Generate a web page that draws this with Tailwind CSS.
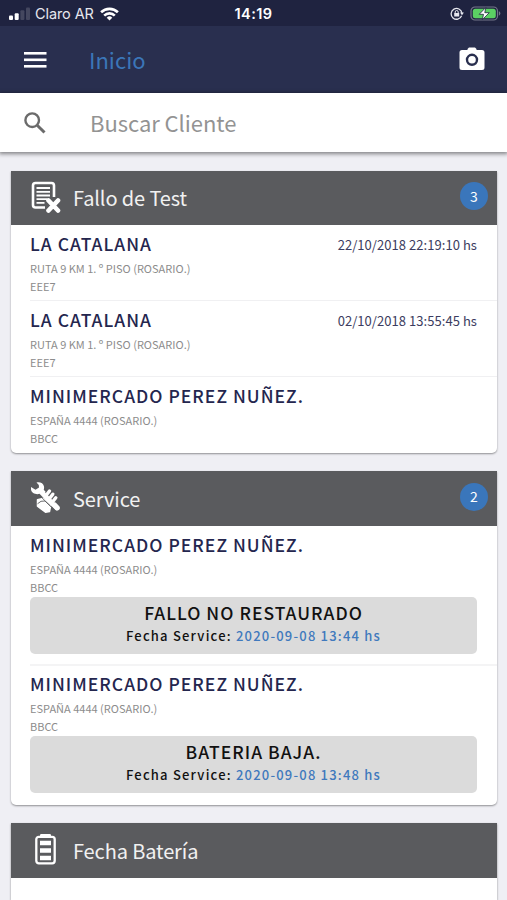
<!DOCTYPE html>
<html lang="es">
<head>
    <meta charset="UTF-8">
    <meta name="viewport" content="width=device-width, initial-scale=1.0">
    <title>Inicio</title>
    <!-- Tailwind CSS CDN -->
    <script src="https://cdn.jsdelivr.net/npm/@tailwindcss/browser@4"></script>
    <style>
        body {
            font-family: 'Noto Sans CJK JP', 'Noto Sans', sans-serif;
        }
    </style>
</head>
<body class="flex h-[900px] flex-col overflow-hidden bg-[#efeff4]">
    <!-- Status bar -->
    <div class="grid h-[26px] shrink-0 grid-cols-3 items-center bg-[#1f2340] pt-px font-['Inter'] text-[14.5px] text-[#e6e7ee]">
        <div class="flex items-center pl-[9px]">
            <svg class="h-[13px] w-[22px]" viewBox="0 0 22 13">
                <rect x="0" y="8.500" width="4" height="4.500" rx="1" fill="#fff"/>
                <rect x="5.700" y="6.200" width="4" height="6.800" rx="1" fill="#fff"/>
                <rect x="11.400" y="3.300" width="4" height="9.700" rx="1" fill="#44475f"/>
                <rect x="17" y="0.500" width="4" height="12.500" rx="1" fill="#44475f"/>
            </svg>
            <span class="ml-1 whitespace-nowrap tracking-[-0.1px]">Claro AR</span>
            <svg class="ml-[6px] h-[14px] w-[19px]" viewBox="0 0 19 14" fill="none" stroke="#fff" stroke-width="2.600">
                <path d="M1.100 5.300a12 12 0 0 1 16.800 0"/>
                <path d="M4.200 8.600a7.500 7.500 0 0 1 10.600 0"/>
                <path d="M9.500 13.500 6.700 10.700a4 4 0 0 1 5.600 0z" fill="#fff" stroke="none"/>
            </svg>
        </div>
        <div class="text-center font-semibold tracking-[0.4px] text-white">14:19</div>
        <div class="flex items-center justify-end gap-[6px] pr-[6px]">
            <svg class="h-[13px] w-[14px]" viewBox="0 0 14 13" fill="none" stroke="#e6e7ee" stroke-width="1.300">
                <path d="M11.600 8.800A5.400 5.400 0 1 1 11.900 6"/>
                <path d="M10 5.500h3.900L12 8.300z" fill="#e6e7ee" stroke="none"/>
                <rect x="4.200" y="6" width="5" height="3.500" fill="#e6e7ee" stroke="none"/>
                <path d="M5.200 6.200V5a1.500 1.500 0 0 1 3 0v1.200" stroke-width="1"/>
            </svg>
            <svg class="h-[15px] w-[31px]" viewBox="0 0 31 15">
                <rect x="1" y="1" width="26.500" height="13" rx="4" fill="none" stroke="#747789" stroke-width="1.200"/>
                <rect x="2.800" y="2.800" width="23" height="9.400" rx="2.500" fill="#5bd163"/>
                <path d="M28.900 5.300a2.400 2.400 0 0 1 0 4.400z" fill="#747789"/>
                <path d="M15.800 1.500 9.200 8.300h4.300l-1.200 5.400 7-7h-4.500z" fill="#fff" stroke="#1f2340" stroke-width=".8"/>
            </svg>
        </div>
    </div>

    <!-- Toolbar -->
    <header class="flex h-[67px] shrink-0 items-center bg-[#292f4f] pr-[22px] pb-[2px] pl-[24px]">
        <svg class="mt-[2px] h-[16px] w-[23px]" viewBox="0 0 23 16" fill="#fff">
            <rect y="0" width="22.500" height="2.600"/>
            <rect y="6.500" width="22.500" height="2.600"/>
            <rect y="13" width="22.500" height="2.600"/>
        </svg>
        <h1 class="ml-[42px] text-[22px] leading-[30px] text-[#3b76b8]">Inicio</h1>
        <svg class="ml-auto h-[24px] w-[26px]" viewBox="0 0 26 24">
            <path d="M8.500 2 10 .6h6L17.500 2v1H23a2.500 2.500 0 0 1 2.500 2.500v15A2.500 2.500 0 0 1 23 23H3a2.500 2.500 0 0 1-2.500-2.500v-15A2.500 2.500 0 0 1 3 3h5.500z" fill="#fff"/>
            <circle cx="13" cy="12.800" r="5" fill="none" stroke="#292f4f" stroke-width="2.400"/>
        </svg>
    </header>

    <!-- Search -->
    <div class="relative flex h-[59px] shrink-0 items-center bg-white pl-[24px] shadow-[0_1px_4px_1px_rgba(0,0,0,0.45)]">
        <svg class="h-[22px] w-[22px]" viewBox="0 0 22 22" fill="none" stroke="#6b6b6b">
            <circle cx="8.200" cy="8.200" r="6.800" stroke-width="2.400"/>
            <path d="m13.200 13.200 7.300 7.300" stroke-width="3"/>
        </svg>
        <span class="mb-px ml-[44px] text-[22px] leading-[30px] tracking-[-0.05px] text-[#939393]">Buscar Cliente</span>
    </div>

    <main class="flex min-h-0 flex-1 flex-col gap-[18px] overflow-hidden pt-[19px] pr-[10px] pl-[11px]">
        <!-- Fallo de Test -->
        <section class="shrink-0 rounded-b-[5px] bg-white shadow-[0_1px_2px_rgba(0,0,0,0.4)]">
            <div class="flex h-[54px] items-center bg-[#5a5b5e] pr-[9px] pl-[20px]">
                <svg class="mb-[2px] h-[32px] w-[30px]" viewBox="0 0 30 32" fill="none" stroke="#fff">
                    <path d="M14 26.500H4.500A2.500 2.500 0 0 1 2 24V4.500A2.500 2.500 0 0 1 4.500 2h16A2.500 2.500 0 0 1 23 4.500V16" stroke-width="2.600"/>
                    <path d="M5.500 7h13.500M5.500 10.800h13.500M5.500 14.500h13.500M5.500 18.200h11M5.500 21.800h8" stroke-width="1.800"/>
                    <path d="m17.500 19.500 9.500 10M27 19.500l-9.500 10" stroke-width="4.600" stroke-linecap="round"/>
                </svg>
                <h2 class="ml-[12px] text-[20px] leading-[30px] tracking-[-0.12px] text-[#f1f1f1]">Fallo de Test</h2>
                <span class="mb-[4px] ml-auto flex h-[28px] w-[28px] items-center justify-center rounded-full bg-[#3a76bb] text-[14px] text-white">3</span>
            </div>
            <ul class="pl-[19px]">
                <li class="h-[76px] border-b border-[#f0f0f2] pt-[7px]">
                    <div class="flex items-center justify-between pr-[20px]">
                        <h3 class="text-[17.5px] leading-[24px] font-medium tracking-[1.02px] text-[#24264e]">LA CATALANA</h3>
                        <span class="pt-px text-[13px] leading-[23px] tracking-[0.05px] text-[#3c3c60]">22/10/2018 22:19:10 hs</span>
                    </div>
                    <p class="mt-[3px] text-[11px] leading-[18px] text-[#8c8c8c]">RUTA 9 KM 1. º PISO (ROSARIO.)</p>
                    <p class="text-[11px] leading-[18px] text-[#8c8c8c]">EEE7</p>
                </li>
                <li class="h-[76px] border-b border-[#f0f0f2] pt-[7px]">
                    <div class="flex items-center justify-between pr-[20px]">
                        <h3 class="text-[17.5px] leading-[24px] font-medium tracking-[1.02px] text-[#24264e]">LA CATALANA</h3>
                        <span class="pt-px text-[13px] leading-[23px] tracking-[0.05px] text-[#3c3c60]">02/10/2018 13:55:45 hs</span>
                    </div>
                    <p class="mt-[3px] text-[11px] leading-[18px] text-[#8c8c8c]">RUTA 9 KM 1. º PISO (ROSARIO.)</p>
                    <p class="text-[11px] leading-[18px] text-[#8c8c8c]">EEE7</p>
                </li>
                <li class="h-[76px] pt-[7px]">
                    <h3 class="text-[17.5px] leading-[24px] font-medium tracking-[1.02px] text-[#24264e]">MINIMERCADO PEREZ NUÑEZ.</h3>
                    <p class="mt-[3px] text-[11px] leading-[18px] text-[#8c8c8c]">ESPAÑA 4444 (ROSARIO.)</p>
                    <p class="text-[11px] leading-[18px] text-[#8c8c8c]">BBCC</p>
                </li>
            </ul>
        </section>

        <!-- Service -->
        <section class="shrink-0 rounded-b-[5px] bg-white shadow-[0_1px_2px_rgba(0,0,0,0.4)]">
            <div class="flex h-[55px] items-center bg-[#5a5b5e] pr-[9px] pl-[19px]">
                <svg class="mb-[3px] h-[32px] w-[31px]" viewBox="0 0 31 32">
                    <path d="M6.500 1.500c3-1 7 .5 7.500 4 .2 1.500 0 2.500-.3 3.300L29.500 25.500c1.500 3-1.500 5-4 3.500L9.500 12.800C6 14 1.500 12 1 8.500V6l4.500 2.800L9 6.500 8.800 4z" fill="#fff"/>
                    <path d="m16.500 14 3-4M19.800 17.200l3-4M23 20.500l2.800-3.700" stroke="#5a5b5e" stroke-width="5" stroke-linecap="round"/>
                    <path d="m16 14.500 3.500-4.500M19.300 17.700l3.500-4.500M22.500 21l3.300-4.200" stroke="#fff" stroke-width="3.400" stroke-linecap="round"/>
                    <path d="m14.500 14 12.500 13" stroke="#fff" stroke-width="4.500" stroke-linecap="round"/>
                    <path d="m7.500 18.800 5.300-1.300 2.700 1.500 5.200 5.500-1.200 6-4 .7-8-6z" fill="#fff" stroke="#fff" stroke-width="1.500" stroke-linejoin="round"/>
                    <path d="m7.500 22.800 3.500-2.500 4-.3 5.500 5M12 16.800l9.500 9.500" fill="none" stroke="#5a5b5e" stroke-width=".9"/>
                </svg>
                <h2 class="ml-[12px] text-[20px] leading-[30px] tracking-[-0.12px] text-[#f1f1f1]">Service</h2>
                <span class="mb-[4px] ml-auto flex h-[28px] w-[28px] items-center justify-center rounded-full bg-[#3a76bb] text-[14px] text-white">2</span>
            </div>
            <ul class="pl-[19px]">
                <li class="h-[140px] border-b-2 border-[#f4f4f5] pt-[7px] pr-[20px]">
                    <h3 class="text-[17.5px] leading-[24px] font-medium tracking-[1.02px] text-[#24264e]">MINIMERCADO PEREZ NUÑEZ.</h3>
                    <p class="mt-[3px] text-[11px] leading-[18px] text-[#8c8c8c]">ESPAÑA 4444 (ROSARIO.)</p>
                    <p class="text-[11px] leading-[18px] text-[#8c8c8c]">BBCC</p>
                    <div class="mt-px h-[57px] rounded-[5px] bg-[#dbdbdb] pt-[4px] text-center">
                        <p class="text-[17.5px] leading-[24px] font-medium tracking-[1.02px] text-[#111]">FALLO NO RESTAURADO</p>
                        <p class="mt-px text-[13px] leading-[20px] font-medium tracking-[1.2px] text-[#111]">Fecha Service: <span class="text-[#4079bd]">2020-09-08 13:44 hs</span></p>
                    </div>
                </li>
                <li class="h-[139px] pt-[6px] pr-[20px]">
                    <h3 class="text-[17.5px] leading-[24px] font-medium tracking-[1.02px] text-[#24264e]">MINIMERCADO PEREZ NUÑEZ.</h3>
                    <p class="mt-[3px] text-[11px] leading-[18px] text-[#8c8c8c]">ESPAÑA 4444 (ROSARIO.)</p>
                    <p class="text-[11px] leading-[18px] text-[#8c8c8c]">BBCC</p>
                    <div class="mt-px h-[57px] rounded-[5px] bg-[#dbdbdb] pt-[4px] text-center">
                        <p class="text-[17.5px] leading-[24px] font-medium tracking-[1.02px] text-[#111]">BATERIA BAJA.</p>
                        <p class="mt-px text-[13px] leading-[20px] font-medium tracking-[1.2px] text-[#111]">Fecha Service: <span class="text-[#4079bd]">2020-09-08 13:48 hs</span></p>
                    </div>
                </li>
            </ul>
        </section>

        <!-- Fecha Batería -->
        <section class="flex-1 bg-white shadow-[0_1px_2px_rgba(0,0,0,0.4)]">
            <div class="flex h-[55px] items-center bg-[#5a5b5e] pl-[24px]">
                <svg class="mb-[3px] h-[32px] w-[21px]" viewBox="0 0 21 32">
                    <path d="M5 3.500V2.200Q5 1 6.200 1h8.600Q16 1 16 2.200v1.300z" fill="#fff"/>
                    <rect x="1.300" y="3.800" width="18.400" height="26.500" rx="2.500" fill="none" stroke="#fff" stroke-width="2.300"/>
                    <path d="M5 10h11M5 17.500h11M5 25h11" stroke="#fff" stroke-width="4.500"/>
                </svg>
                <h2 class="ml-[17px] text-[20px] leading-[30px] tracking-[-0.12px] text-[#f1f1f1]">Fecha Batería</h2>
            </div>
        </section>
    </main>
</body>
</html>
